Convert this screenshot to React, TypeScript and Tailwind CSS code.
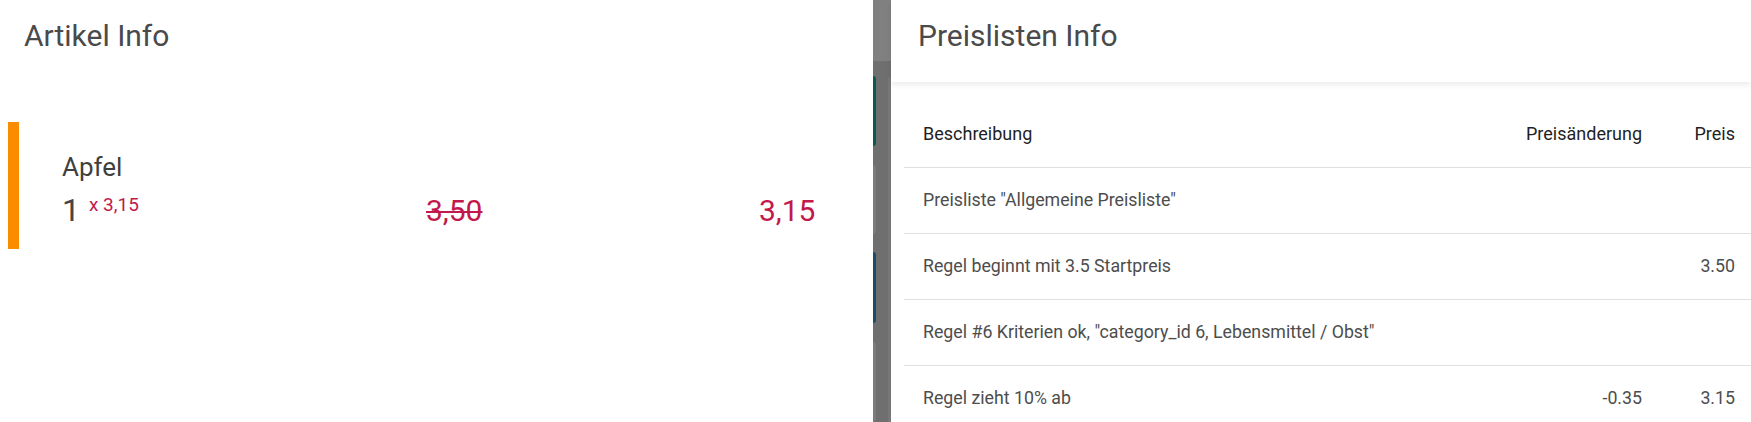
import React from "react";

const rows = [
  { text: 'Preisliste "Allgemeine Preisliste"', change: "", price: "" },
  { text: "Regel beginnt mit 3.5 Startpreis", change: "", price: "3.50" },
  {
    text: 'Regel #6 Kriterien ok, "category_id 6, Lebensmittel / Obst"',
    change: "",
    price: "",
  },
  { text: "Regel zieht 10% ab", change: "-0.35", price: "3.15" },
];

const App = () => {
  return (
    <div className="flex h-[422px] w-full overflow-hidden bg-white font-['Roboto',sans-serif]">
      {/* LEFT: Artikel Info */}
      <div className="w-[873px] shrink-0 bg-white">
        <h2 className="pl-[24px] pt-[18px] text-[30px] leading-[36px] font-normal text-[#4a4a4a]">
          Artikel Info
        </h2>

        <div className="mt-[68px] ml-[8px] flex h-[127px]">
          <div className="w-[11px] shrink-0 bg-[#fb8c00]" />
          <div className="flex-1 pl-[43px] pt-[30px]">
            <div className="text-[26px] leading-[30px] font-normal text-[#3f3f3f]">
              Apfel
            </div>
            <div className="mt-[10px] flex items-baseline">
              <div className="flex w-[364px] items-baseline">
                <span className="text-[32px] leading-[36px] font-normal text-[#454545]">
                  1
                </span>
                <span className="relative -top-[10px] ml-[9px] text-[19px] text-[#c2184b]">
                  x 3,15
                </span>
              </div>
              <div className="w-[333px] text-[30px] leading-[36px] text-[#c2184b] line-through decoration-2">
                3,50
              </div>
              <div className="text-[30px] leading-[36px] text-[#c2184b]">
                3,15
              </div>
            </div>
          </div>
        </div>
      </div>

      {/* backdrop strip between dialogs */}
      <div className="flex w-[18px] shrink-0 flex-col">
        <div className="h-[74px] bg-[#808080]" />
        <div className="flex flex-1 bg-[#6f6f6f]">
          <div className="flex w-[3px] flex-col">
            <div className="mt-[15px] h-[70px] rounded-r-[3px] bg-[#0b5a4f]" />
            <div className="mt-[19px] h-[69px] rounded-r-[3px] bg-[#7b7b7b]" />
            <div className="mt-[18px] h-[71px] rounded-r-[3px] bg-[#1b4b68]" />
            <div className="mt-[19px] h-[80px] rounded-r-[3px] bg-[#7b7b7b]" />
          </div>
          <div className="flex-1" />
          <div className="mt-[16px] w-[3px] bg-[#777777]" />
        </div>
      </div>

      {/* RIGHT: Preislisten Info */}
      <div className="min-w-0 flex-1 bg-white">
        <div className="relative z-10 h-[82px] bg-white pl-[27px] pt-[18px] shadow-[0_3px_6px_rgba(0,0,0,0.08)]">
          <h2 className="text-[30px] leading-[36px] font-normal text-[#4a4a4a]">
            Preislisten Info
          </h2>
        </div>

        <div className="ml-[13px] mt-[19px] w-[851px]">
          <table className="w-full border-collapse text-[17.75px]">
            <thead>
              <tr className="h-[66px] border-b border-[#e0e0e0] text-[18px]">
                <th className="pl-[19px] text-left font-normal text-[#1f1f1f]">
                  Beschreibung
                </th>
                <th className="w-[155px] pr-[20px] text-right font-normal text-[#1f1f1f]">
                  Preisänderung
                </th>
                <th className="w-[93px] pr-[20px] text-right font-normal text-[#1f1f1f]">
                  Preis
                </th>
              </tr>
            </thead>
            <tbody>
              {rows.map((r, i) => (
                <tr key={i} className="h-[66px] border-b border-[#e0e0e0]">
                  <td className="pl-[19px] text-[#4d4d4d]">{r.text}</td>
                  <td className="pr-[20px] text-right text-[#4d4d4d]">
                    {r.change}
                  </td>
                  <td className="pr-[20px] text-right text-[#4d4d4d]">
                    {r.price}
                  </td>
                </tr>
              ))}
            </tbody>
          </table>
        </div>
      </div>
    </div>
  );
};

export default App;
